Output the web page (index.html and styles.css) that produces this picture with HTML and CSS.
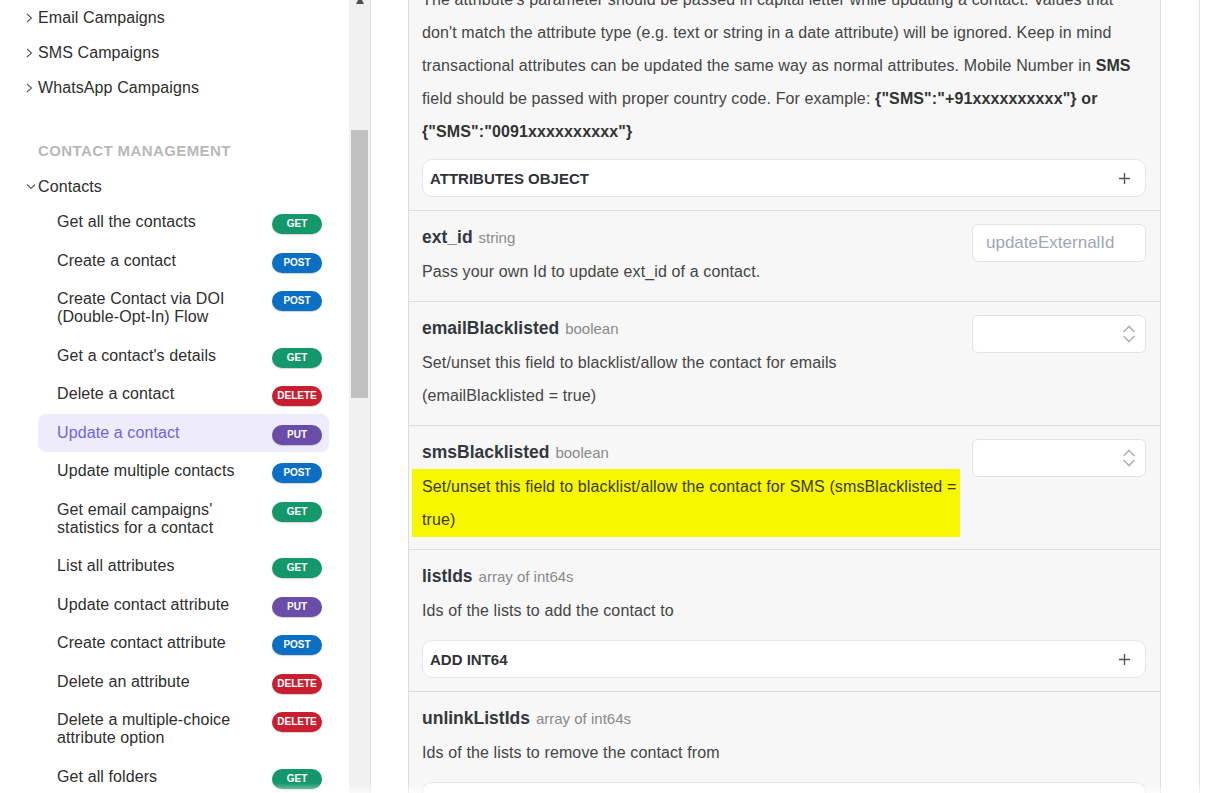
FILE: index.html
```html
<!DOCTYPE html>
<html lang="en">
<head>
  <meta charset="UTF-8">
  <title>Update a contact - API Reference</title>
  <meta name="viewport" content="width=device-width, initial-scale=1.0">
  <link rel="stylesheet" href="styles.css">
</head>

<body>
  <div class="page">
    <aside class="sidebar">
      <ul class="nav">
        <li class="nav-group">
          <svg class="chev" width="12" height="10" viewBox="0 0 12 10"><path d="M1 1 L5.5 5 L1 9"/></svg>
          Email Campaigns
        </li>
        <li class="nav-group">
          <svg class="chev" width="12" height="10" viewBox="0 0 12 10"><path d="M1 1 L5.5 5 L1 9"/></svg>
          SMS Campaigns
        </li>
        <li class="nav-group">
          <svg class="chev" width="12" height="10" viewBox="0 0 12 10"><path d="M1 1 L5.5 5 L1 9"/></svg>
          WhatsApp Campaigns
        </li>
      </ul>

      <div class="nav-heading">CONTACT MANAGEMENT</div>

      <div class="nav-group open">
        <svg class="chev" width="12" height="10" viewBox="0 0 12 10"><path d="M1 2.5 L5 6.5 L9 2.5"/></svg>
        Contacts
      </div>

      <ul class="endpoints">
        <li class="endpoint"><span class="endpoint-name">Get all the contacts</span><span class="badge get">GET</span></li>
        <li class="endpoint"><span class="endpoint-name">Create a contact</span><span class="badge post">POST</span></li>
        <li class="endpoint"><span class="endpoint-name">Create Contact via DOI (Double-Opt-In) Flow</span><span class="badge post">POST</span></li>
        <li class="endpoint"><span class="endpoint-name">Get a contact's details</span><span class="badge get">GET</span></li>
        <li class="endpoint"><span class="endpoint-name">Delete a contact</span><span class="badge delete">DELETE</span></li>
        <li class="endpoint active"><span class="endpoint-name">Update a contact</span><span class="badge put">PUT</span></li>
        <li class="endpoint"><span class="endpoint-name">Update multiple contacts</span><span class="badge post">POST</span></li>
        <li class="endpoint"><span class="endpoint-name">Get email campaigns' statistics for a contact</span><span class="badge get">GET</span></li>
        <li class="endpoint"><span class="endpoint-name">List all attributes</span><span class="badge get">GET</span></li>
        <li class="endpoint"><span class="endpoint-name">Update contact attribute</span><span class="badge put">PUT</span></li>
        <li class="endpoint"><span class="endpoint-name">Create contact attribute</span><span class="badge post">POST</span></li>
        <li class="endpoint"><span class="endpoint-name">Delete an attribute</span><span class="badge delete">DELETE</span></li>
        <li class="endpoint"><span class="endpoint-name">Delete a multiple-choice attribute option</span><span class="badge delete">DELETE</span></li>
        <li class="endpoint"><span class="endpoint-name">Get all folders</span><span class="badge get">GET</span></li>
      </ul>
    </aside>

    <div class="scrollbar">
      <div class="scroll-up"></div>
      <div class="scroll-thumb"></div>
    </div>

    <main class="content">
      <div class="params">
        <div class="param">
          <p class="param-desc">
            The attribute's parameter should be passed in capital letter while updating a contact. Values that
            don't match the attribute type (e.g. text or string in a date attribute) will be ignored. Keep in mind
            transactional attributes can be updated the same way as normal attributes. Mobile Number in <strong>SMS</strong>
            field should be passed with proper country code. For example: <strong>{"SMS":"+91xxxxxxxxxx"} or {"SMS":"0091xxxxxxxxxx"}</strong>
          </p>
          <div class="add-box">
            <span>ATTRIBUTES OBJECT</span>
            <svg class="plus" width="11" height="11" viewBox="0 0 11 11"><path d="M5.5 0 V11 M0 5.5 H11"/></svg>
          </div>
        </div>

        <div class="param">
          <div class="param-head">
            <div class="param-info">
              <div class="param-title">ext_id<span class="param-type">string</span></div>
              <p class="param-desc">Pass your own Id to update ext_id of a contact.</p>
            </div>
            <input class="field" type="text" placeholder="updateExternalId">
          </div>
        </div>

        <div class="param">
          <div class="param-head">
            <div class="param-info">
              <div class="param-title">emailBlacklisted<span class="param-type">boolean</span></div>
              <p class="param-desc">Set/unset this field to blacklist/allow the contact for emails (emailBlacklisted = true)</p>
            </div>
            <div class="field select">
              <svg width="14" height="20" viewBox="0 0 14 20"><path d="M1.5 8 L7 2.5 L12.5 8 M1.5 12 L7 17.5 L12.5 12"/></svg>
            </div>
          </div>
        </div>

        <div class="param">
          <div class="param-head">
            <div class="param-info">
              <div class="param-title">smsBlacklisted<span class="param-type">boolean</span></div>
              <p class="param-desc marked">Set/unset this field to blacklist/allow the contact for SMS (smsBlacklisted = true)</p>
            </div>
            <div class="field select">
              <svg width="14" height="20" viewBox="0 0 14 20"><path d="M1.5 8 L7 2.5 L12.5 8 M1.5 12 L7 17.5 L12.5 12"/></svg>
            </div>
          </div>
        </div>

        <div class="param">
          <div class="param-title">listIds<span class="param-type">array of int64s</span></div>
          <p class="param-desc">Ids of the lists to add the contact to</p>
          <div class="add-box list">
            <span>ADD INT64</span>
            <svg class="plus" width="11" height="11" viewBox="0 0 11 11"><path d="M5.5 0 V11 M0 5.5 H11"/></svg>
          </div>
        </div>

        <div class="param">
          <div class="param-title">unlinkListIds<span class="param-type">array of int64s</span></div>
          <p class="param-desc">Ids of the lists to remove the contact from</p>
          <div class="add-box list">
            <span>ADD INT64</span>
            <svg class="plus" width="11" height="11" viewBox="0 0 11 11"><path d="M5.5 0 V11 M0 5.5 H11"/></svg>
          </div>
        </div>
      </div>
    </main>
  </div>

  <div class="fade"></div>
</body>
</html>
```

FILE: styles.css
```css
html, body {
  height: 100%;
  overflow: hidden;
}

body {
  margin: 0;
  font-family: 'Liberation Sans', Arial, Helvetica, sans-serif;
  background-color: #ffffff;
  color: #333;
}

.page {
  display: flex;
  height: 100%;
}

/* left navigation */
.sidebar {
  flex: none;
  width: 349px;
  font-size: 16px;
  line-height: 18px;
  letter-spacing: 0.1px;
}

.nav {
  list-style: none;
  margin: 0;
  padding: 0;
}

.nav-group {
  display: flex;
  align-items: center;
  padding: 8.5px 0 8.5px 26px;
  color: #2e2e2e;
}

.nav-group.open {
  margin-top: 9.5px;
  padding-bottom: 7px;
}

.chev {
  flex: none;
  width: 12px;
  height: 10px;
}

.chev path {
  fill: none;
  stroke: #5a5a5a;
  stroke-width: 1.1;
}

.nav-heading {
  margin-top: 37px;
  padding-left: 38px;
  font-size: 15px;
  font-weight: bold;
  letter-spacing: 0.4px;
  color: #b8b8b8;
}

.endpoints {
  list-style: none;
  margin: 0 0 0 38px;
  padding: 0;
  width: 291px;
}

.endpoint {
  display: flex;
  align-items: flex-start;
  gap: 12px;
  padding: 10.25px 7px 10.25px 19px;
  border-radius: 8px;
  color: #2e2e2e;
}

.endpoint-name {
  flex: 1;
}

.endpoint.active {
  background-color: #eeecfb;
  color: #7064e2;
}

.badge {
  flex: none;
  width: 50px;
  height: 20px;
  margin: 0.75px 0 -3px;
  border-radius: 10px;
  font-size: 10px;
  font-weight: bold;
  line-height: 20px;
  letter-spacing: 0;
  text-align: center;
  color: #fff;
  box-shadow: 0 1px 1px rgba(0, 0, 0, 0.18);
}

.badge.get { background-color: #13976b; }
.badge.post { background-color: #0b6fc4; }
.badge.delete { background-color: #c91f30; }
.badge.put { background-color: #6a4ca9; }

/* fake scroll track for the nav */
.scrollbar {
  flex: none;
  width: 21px;
  background-color: #f1f1f1;
  border-right: 1px solid #e4e4e4;
}

.scroll-up {
  width: 0;
  height: 0;
  margin: -4px auto 0;
  border-left: 4.5px solid transparent;
  border-right: 4.5px solid transparent;
  border-bottom: 8px solid #505050;
}

.scroll-thumb {
  width: 17px;
  height: 268px;
  margin: 126px 0 0 2px;
  background-color: #c1c1c1;
}

/* request body */
.content {
  flex: none;
  width: 753px;
  padding: 0 38px 0 37px;
  border-right: 1px solid #e4e4e4;
}

.params {
  margin-top: -30px;
  background-color: #f7f7f7;
  border-left: 1px solid #dcdcdc;
  border-right: 1px solid #dcdcdc;
}

.param {
  padding: 13px 14px 13px 13px;
  border-bottom: 1px solid #dcdcdc;
}

.param-head {
  display: flex;
  align-items: flex-start;
  gap: 12px;
}

.param-info {
  flex: 1;
}

.param-title {
  font-size: 17.5px;
  font-weight: bold;
  line-height: 26px;
  color: #33383d;
}

.param-type {
  margin-left: 6px;
  font-size: 15px;
  font-weight: normal;
  line-height: 1;
  color: #8a8a8a;
}

.param-desc {
  margin: 5px 0 0;
  font-size: 16px;
  line-height: 33px;
  letter-spacing: 0.12px;
  color: #454545;
}

.params > .param:first-child .param-desc {
  margin-top: 0;
}

.param-desc strong {
  color: #333;
}

.param-desc.marked {
  margin: 4px 0 -1px -10px;
  padding: 1px 0 1px 10px;
  background-color: #f7f700;
  color: #3a3a1a;
}

.field {
  flex: none;
  box-sizing: border-box;
  width: 174px;
  height: 38px;
  margin: 0;
  padding: 0 12px 0 13px;
  border: 1px solid #e3e3e3;
  border-radius: 6px;
  background-color: #fff;
  font-family: 'Liberation Sans', Arial, sans-serif;
  font-size: 17px;
  color: #333;
  outline: none;
}

.field::placeholder {
  color: #9ea7b4;
}

.select {
  display: flex;
  align-items: center;
  justify-content: flex-end;
  padding-right: 9px;
}

.select path {
  fill: none;
  stroke: #b3b3b3;
  stroke-width: 1.6;
}

.add-box {
  box-sizing: border-box;
  display: flex;
  align-items: center;
  justify-content: space-between;
  height: 38px;
  margin-top: 11px;
  padding: 0 15px 0 7px;
  border: 1px solid #e6e6e6;
  border-radius: 10px;
  background-color: #fff;
  font-size: 15px;
  font-weight: bold;
  color: #2f3337;
}

.add-box.list {
  margin-top: 13px;
}

.plus path {
  fill: none;
  stroke: #555;
  stroke-width: 1.4;
}

/* soft edge at the bottom of the window */
.fade {
  position: fixed;
  left: 0;
  right: 0;
  bottom: 0;
  height: 10px;
  background: linear-gradient(rgba(255, 255, 255, 0), rgba(255, 255, 255, 0.6));
  pointer-events: none;
}
```
